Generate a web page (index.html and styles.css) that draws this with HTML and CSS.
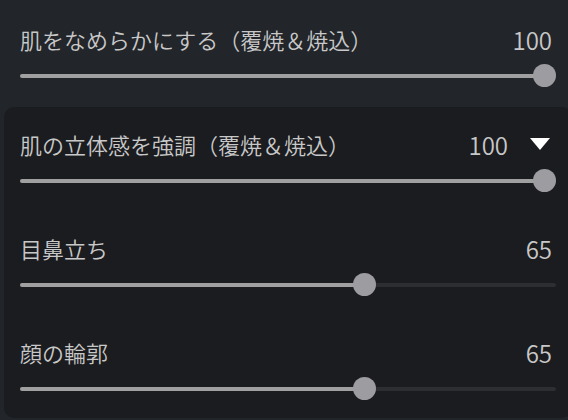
FILE: index.html
```html
<!DOCTYPE html>
<html lang="ja">

<head>
    <meta charset="UTF-8" />
    <meta name="viewport" content="width=device-width, initial-scale=1.0" />
    <title>補正</title>
    <link rel="stylesheet" href="styles.css">
</head>

<body>
    <div class="row top-row">
        <div class="row-head">
            <span class="label">肌をなめらかにする（覆焼＆焼込）</span>
            <span class="value">100</span>
        </div>
        <div class="slider" style="--v: 1">
            <div class="fill"></div>
            <div class="thumb"></div>
        </div>
    </div>

    <div class="panel">
        <div class="row">
            <div class="row-head">
                <span class="label">肌の立体感を強調（覆焼＆焼込）</span>
                <span class="value">100</span>
                <span class="caret"></span>
            </div>
            <div class="slider" style="--v: 1">
                <div class="fill"></div>
                <div class="thumb"></div>
            </div>
        </div>
        <div class="row">
            <div class="row-head">
                <span class="label">目鼻立ち</span>
                <span class="value">65</span>
            </div>
            <div class="slider" style="--v: 0.65">
                <div class="fill"></div>
                <div class="thumb"></div>
            </div>
        </div>
        <div class="row">
            <div class="row-head">
                <span class="label">顔の輪郭</span>
                <span class="value">65</span>
            </div>
            <div class="slider" style="--v: 0.65">
                <div class="fill"></div>
                <div class="thumb"></div>
            </div>
        </div>
    </div>
</body>

</html>
```

FILE: styles.css
```css
* {
    padding: 0;
    margin: 0;
    box-sizing: border-box;
}

body {
    background-color: #22252a;
    color: #c8c8c8;
    font-family: "Noto Sans CJK JP", "Noto Sans", sans-serif;
    font-size: 22px;
    font-weight: 350;
    width: 568px;
    height: 420px;
    overflow: hidden;
}

.top-row {
    padding: 24px 12px 0 20px;
    margin-bottom: 20px;
}

.panel {
    margin-left: 4px;
    width: 568px;
    background-color: #1b1c1f;
    border-radius: 10px;
    padding: 22px 16px 18px 16px;
    display: flex;
    flex-direction: column;
    gap: 41px;
}

.panel .row {
    width: 536px;
}

.row-head {
    display: flex;
    align-items: center;
    height: 30px;
}

.label {
    flex: 1;
    white-space: nowrap;
}

.value {
    font-size: 24px;
    margin-right: 4px;
}

.caret {
    width: 0;
    height: 0;
    border-left: 10px solid transparent;
    border-right: 10px solid transparent;
    border-top: 12px solid #ffffff;
    margin-left: 18px;
    margin-right: 6px;
}

.slider {
    position: relative;
    height: 23px;
    margin-top: 10px;
    width: 536px;
}

.slider::before {
    content: "";
    position: absolute;
    left: 0;
    right: 0;
    top: 10px;
    height: 4px;
    border-radius: 2px;
    background-color: #2d2e32;
}

.fill {
    position: absolute;
    left: 0;
    top: 10px;
    height: 4px;
    border-radius: 2px;
    background-color: #a0a0a0;
    width: calc(var(--v) * (100% - 23px) + 12px);
}

.thumb {
    position: absolute;
    top: 0;
    left: calc(var(--v) * (100% - 23px));
    width: 23px;
    height: 23px;
    border-radius: 50%;
    background-color: #9d9da1;
}
```
